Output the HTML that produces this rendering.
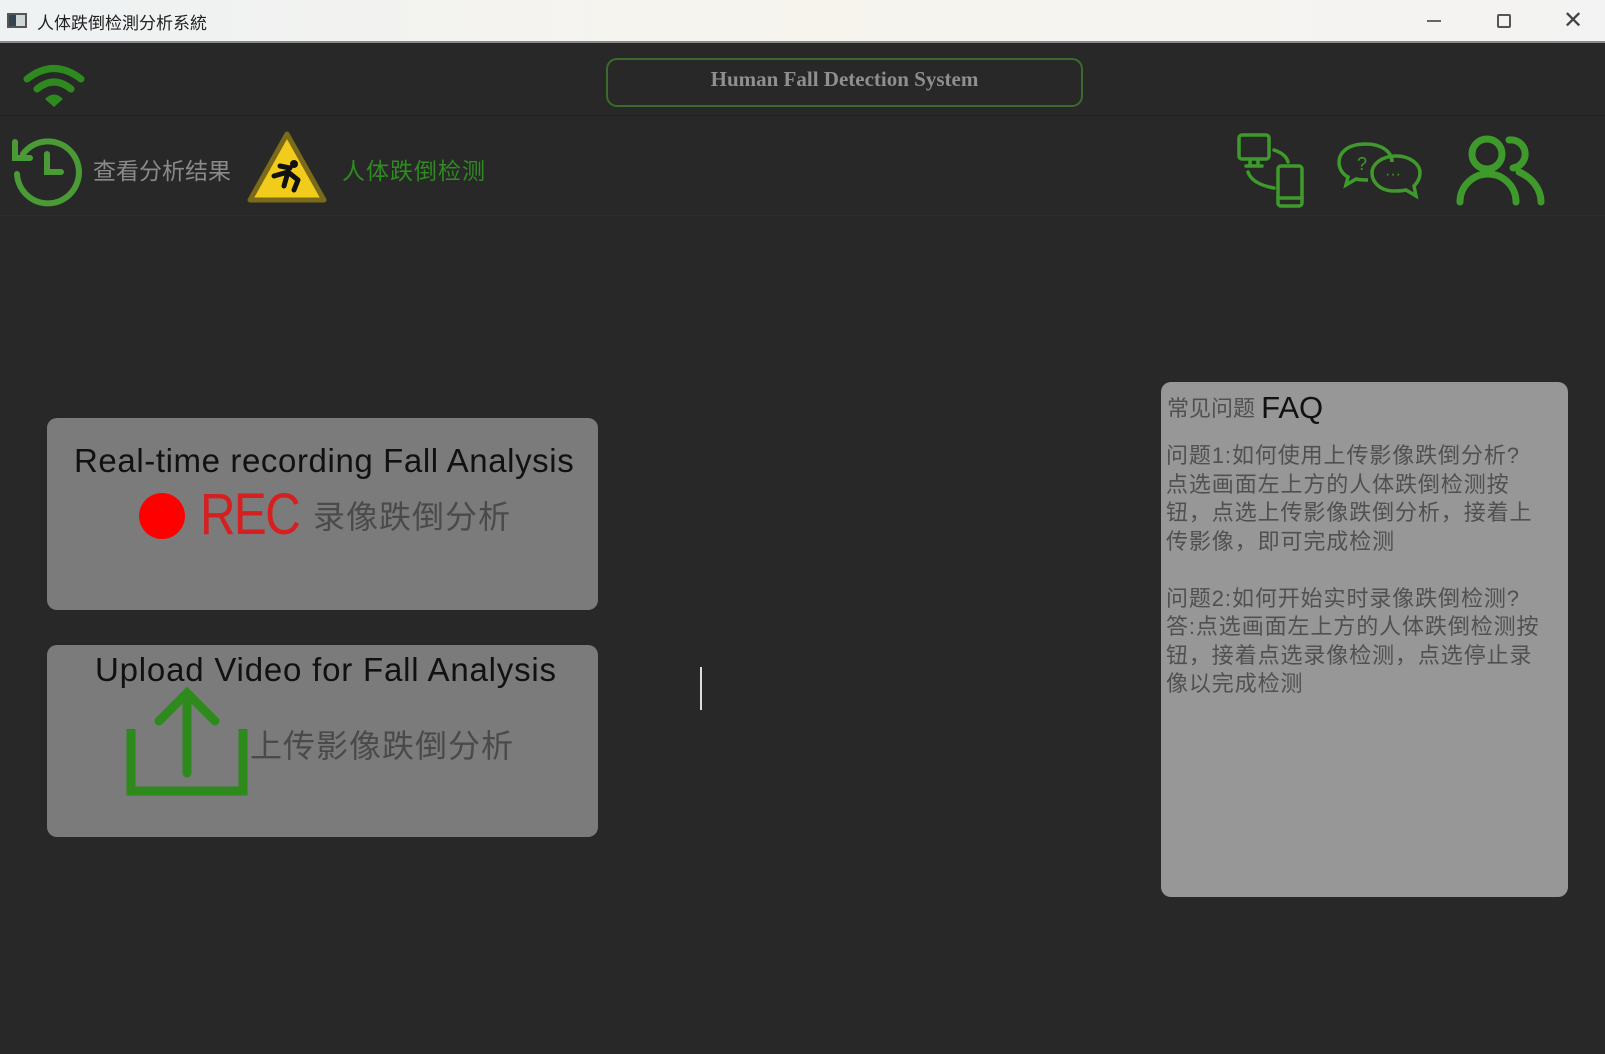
<!DOCTYPE html>
<html><head><meta charset="utf-8"><style>
*{margin:0;padding:0;box-sizing:border-box}
body{width:1605px;height:1054px;background:#282828;overflow:hidden;position:relative;font-family:"Liberation Sans","Noto Sans CJK SC",sans-serif}
.abs{position:absolute}
#title{left:0;top:0;width:1605px;height:43px;background:linear-gradient(90deg,#eef2f3,#f7f4ee 50%,#f3f3f3);border-bottom:2px solid #8a8a8a}
.card{background:#7b7b7b;border-radius:10px;position:absolute}
.cn{font-family:"Liberation Sans","Noto Sans CJK SC",sans-serif;white-space:nowrap}
</style></head><body>
<div id="title" class="abs">
  <div class="abs" style="left:7px;top:13px;width:20px;height:15px;border:2px solid #555;background:#cfd6d8"><div style="width:7px;height:11px;background:#345"></div></div>
  <div class="abs cn" style="left:37px;top:9px;font-size:17px;color:#222">人体跌倒检測分析系統</div>
  <div class="abs" style="left:1427px;top:20px;width:14px;height:2px;background:#666"></div>
  <div class="abs" style="left:1497px;top:14px;width:14px;height:14px;border:2px solid #555;border-radius:2px"></div>
  <div class="abs" style="left:1563px;top:6px;font-size:24px;color:#444">✕</div>
</div>
<div class="abs" style="left:0;top:115px;width:1605px;height:1px;background:#222"></div>
<div class="abs" style="left:0;top:215px;width:1605px;height:1px;background:#2e2e2e"></div>
<svg class="abs" style="left:22px;top:62px" width="64" height="48" viewBox="0 0 64 48">
<g fill="none" stroke="#2e8a1e" stroke-width="7" stroke-linecap="round">
<path d="M5 17 Q32 -4 59 17"/><path d="M15 27 Q32 13 49 27"/></g>
<path d="M23 37 Q32 28 41 37 L32 45 Z" fill="#2e8a1e"/></svg>
<div class="abs" style="left:606px;top:58px;width:477px;height:49px;border:2px solid #3c6a2c;border-radius:11px;text-align:center;line-height:39px;font-family:'Liberation Serif',serif;font-size:21px;font-weight:bold;color:#8f8f8f">Human Fall Detection System</div>
<svg class="abs" style="left:9px;top:130px" width="76" height="78" viewBox="0 0 76 78">
<g fill="none" stroke="#4a9a36" stroke-width="6" stroke-linecap="round">
<path d="M14 24 A31 31 0 1 1 8 44"/><path d="M38 24 V42 H52"/><path d="M6 12 V28 H21"/></g></svg>
<div class="abs cn" style="left:93px;top:152px;font-size:23px;color:#8a8a8a">查看分析结果</div>
<svg class="abs" style="left:246px;top:130px" width="82" height="76" viewBox="0 0 82 76">
<path d="M41 4 L78 70 H4 Z" fill="#f2cc1a" stroke="#7a6a1a" stroke-width="5" stroke-linejoin="round"/>
<g stroke="#111" stroke-width="5" stroke-linecap="round" fill="none"><path d="M28 46 L42 42 L52 50 M42 42 L38 56 M52 50 L48 60 M34 36 L44 38"/></g><circle cx="48" cy="34" r="4" fill="#111"/></svg>
<div class="abs cn" style="left:342px;top:152px;font-size:23px;color:#2f8a22;letter-spacing:1px">人体跌倒检测</div>
<svg class="abs" style="left:1236px;top:132px" width="70" height="76" viewBox="0 0 70 76">
<g fill="none" stroke="#3f9a2c" stroke-width="3.5" stroke-linecap="round">
<rect x="3" y="3" width="30" height="24" rx="3"/><path d="M14 27 V33 M22 27 V33 M10 34 H26"/>
<rect x="42" y="34" width="24" height="40" rx="3"/><path d="M42 66 H66"/>
<path d="M38 18 Q50 22 52 30"/><path d="M12 40 Q16 52 38 56"/></g></svg>
<svg class="abs" style="left:1336px;top:140px" width="88" height="60" viewBox="0 0 88 60">
<g fill="none" stroke="#3f9a2c" stroke-width="3.5">
<path d="M30 4 C10 4 3 14 3 22 C3 30 8 35 12 37 L10 45 L20 39 C24 40 28 40 32 40"/>
<path d="M30 4 C46 4 56 12 56 22"/>
<path d="M60 16 C74 16 84 24 84 33 C84 40 80 44 78 46 L80 56 L70 50 C66 51 62 51 58 51 C44 51 36 42 36 33 C36 24 46 16 60 16 Z"/></g>
<text x="21" y="30" fill="#3f9a2c" font-size="18" font-family="Liberation Sans">?</text>
<text x="49" y="39" fill="#3f9a2c" font-size="16" font-family="Liberation Sans">···</text></svg>
<svg class="abs" style="left:1455px;top:132px" width="92" height="76" viewBox="0 0 92 76">
<g fill="none" stroke="#3f9a2c" stroke-width="7" stroke-linecap="round">
<circle cx="32" cy="22" r="15"/><path d="M5 70 A28 28 0 0 1 61 70"/>
<path d="M54 8 A14 14 0 0 1 58 36"/><path d="M64 40 C78 46 86 58 86 70"/></g></svg>
<div class="abs" style="left:700px;top:667px;width:2px;height:43px;background:#ddd"></div>
<div class="card" style="left:47px;top:418px;width:551px;height:192px">
  <div class="abs" style="left:27px;top:24px;font-size:33px;color:#111;white-space:nowrap;letter-spacing:0.6px">Real-time recording Fall Analysis</div>
  <div class="abs" style="left:92px;top:75px;width:46px;height:46px;border-radius:50%;background:#f00"></div>
  <div class="abs" style="left:153px;top:63px;font-size:58px;color:#d42020;letter-spacing:-2px;transform:scaleX(0.85);transform-origin:left">REC</div>
  <div class="abs cn" style="left:266px;top:74px;font-size:32px;color:#4a4a4a;letter-spacing:1px">录像跌倒分析</div>
</div>
<div class="card" style="left:47px;top:645px;width:551px;height:192px">
  <div class="abs" style="left:48px;top:6px;font-size:33px;color:#111;white-space:nowrap;letter-spacing:0.8px">Upload Video for Fall Analysis</div>
  <svg class="abs" style="left:78px;top:40px" width="124" height="112" viewBox="0 0 124 112">
  <g fill="none" stroke="#2f8a1e" stroke-width="9"><path d="M6 44 V106 H118 V44"/><path d="M62 88 V8 M34 36 L62 8 L90 36" stroke-linecap="round"/></g></svg>
  <div class="abs cn" style="left:203px;top:76px;font-size:32px;color:#4a4a4a;letter-spacing:1px">上传影像跌倒分析</div>
</div>
<div class="card" style="left:1161px;top:382px;width:407px;height:515px;background:#979797">
  <div class="abs cn" style="left:6px;top:6px;font-size:22px;color:#505050">常见问题 <span style="font-size:31px;color:#111;position:relative;top:2px">FAQ</span></div>
  <div class="abs cn" style="left:5px;top:60px;font-size:22px;line-height:28.5px;color:#505050;white-space:pre;letter-spacing:0.9px">问题1:如何使用上传影像跌倒分析?
点选画面左上方的人体跌倒检测按
钮，点选上传影像跌倒分析，接着上
传影像，即可完成检测

问题2:如何开始实时录像跌倒检测?
答:点选画面左上方的人体跌倒检测按
钮，接着点选录像检测，点选停止录
像以完成检测</div>
</div>
</body></html>
